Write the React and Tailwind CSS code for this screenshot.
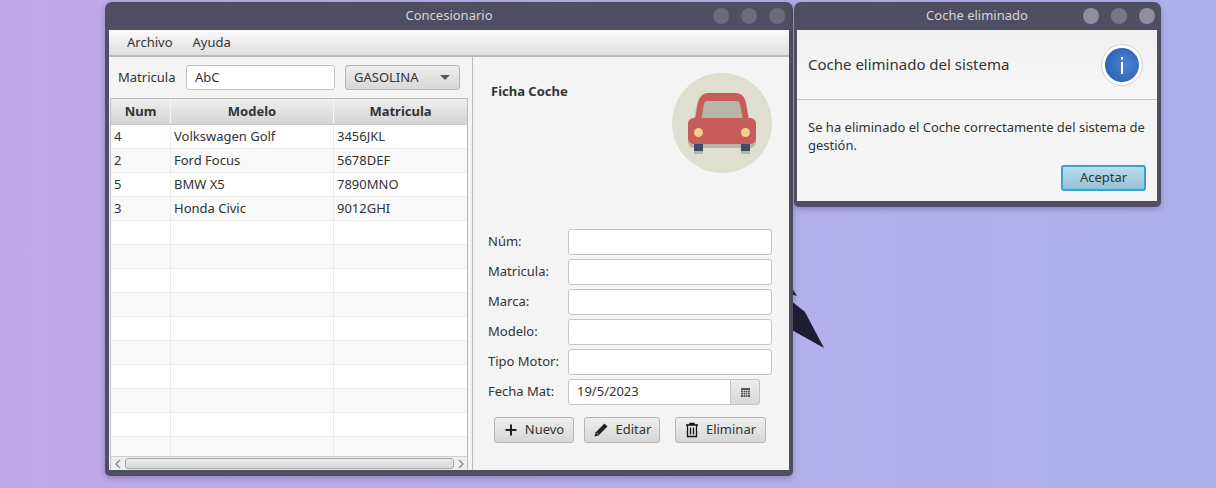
import React from "react";

const font = { fontFamily: '"Noto Sans", sans-serif' };
const rows = [
  ["4", "Volkswagen Golf", "3456JKL"],
  ["2", "Ford Focus", "5678DEF"],
  ["5", "BMW X5", "7890MNO"],
  ["3", "Honda Civic", "9012GHI"],
  ["", "", ""], ["", "", ""], ["", "", ""], ["", "", ""], ["", "", ""],
  ["", "", ""], ["", "", ""], ["", "", ""], ["", "", ""], ["", "", ""],
];
const fields = ["Núm:", "Matricula:", "Marca:", "Modelo:", "Tipo Motor:"];

function Dots() {
  return (
    <div className="absolute right-[4px] top-[7px] flex gap-[12px]">
      <span className="w-[16px] h-[16px] rounded-full bg-[#6c6b78]" />
      <span className="w-[16px] h-[16px] rounded-full bg-[#6c6b78]" />
      <span className="w-[16px] h-[16px] rounded-full bg-[#6c6b78]" />
    </div>
  );
}

function Car() {
  return (
    <svg width="100" height="100" viewBox="672 72 100 100" className="block">
      <circle cx="722" cy="122" r="50" fill="#dfdfd0" />
      <path d="M688 124h68v17a6 6 0 0 1-6 6h-56a6 6 0 0 1-6-6z" fill="#b6b6a8" />
      <rect x="694" y="146" width="9" height="7" fill="#b6b6a8" />
      <rect x="741" y="146" width="9" height="7" fill="#b6b6a8" />
      <rect x="694" y="143" width="9" height="7" fill="#3e4c66" />
      <rect x="741" y="143" width="9" height="7" fill="#3e4c66" />
      <path d="M704 100h38c1.500 0 2.500 1 3 3l3 15h-54l3-15c.5-2 1.500-3 3-3z" fill="#b6b6a8" />
      <path d="M695 119l3-17c1-6 5-10 10-10h28c5 0 9 4 10 10l3 17h-6l-3-16c-.4-2-1.500-3-3-3h-30c-1.500 0-2.600 1-3 3l-3 16z" fill="#c75c5c" />
      <path d="M694 117h56c3.500 0 6 2.500 6 6v14c0 3.500-2.500 6-6 6h-56c-3.500 0-6-2.500-6-6v-14c0-3.500 2.500-6 6-6z" fill="#c75c5c" />
      <circle cx="698.500" cy="131.500" r="4.500" fill="#f5cf87" />
      <circle cx="745.500" cy="131.500" r="4.500" fill="#f5cf87" />
    </svg>
  );
}

function Btn({ w, icon, label, cls = "" }) {
  return (
    <div className={`h-[26px] rounded-[3px] border border-[#b5b5b5] bg-gradient-to-b from-[#efefef] to-[#d6d6d6] flex items-center justify-center gap-[7px] text-[13px] text-[#333] ${cls}`} style={{ width: w }}>
      {icon}
      <span>{label}</span>
    </div>
  );
}

export default function App() {
  return (
    <div className="relative w-[1216px] h-[488px] overflow-hidden bg-gradient-to-r from-[#c0a9e8] via-[#b6afe9] to-[#aeb1ec]" style={font}>
      <svg className="absolute left-[780px] top-[270px]" width="60" height="90" viewBox="780 270 60 90">
        <path d="M790 285L797 296L790 294z" fill="#1e1d33" />
        <path d="M790 300L805 312L824 348L790 329z" fill="#1e1d33" />
      </svg>

      {/* Main window */}
      <div className="absolute left-[105px] top-[2px] w-[688px] h-[474px] rounded-t-[7px] rounded-b-[5px] bg-[#504e62] px-[4px] pb-[6px] flex flex-col shadow-[0_2px_6px_rgba(40,30,80,0.3)]">
        <div className="relative h-[28px] shrink-0 flex items-center justify-center text-[13px] text-[#d5d5dc]">
          Concesionario
          <div className="absolute right-[4px] top-[6px] flex gap-[12px]">
            <span className="w-[16px] h-[16px] rounded-full bg-[#6c6b78]" />
            <span className="w-[16px] h-[16px] rounded-full bg-[#6c6b78]" />
            <span className="w-[16px] h-[16px] rounded-full bg-[#6c6b78]" />
          </div>
        </div>
        <div className="h-[27px] shrink-0 bg-gradient-to-b from-[#fbfbfb] to-[#dedede] border-b-2 border-[#b9b9b9] flex items-center gap-[20px] pl-[18px] text-[13px] text-[#333]">
          <span>Archivo</span>
          <span>Ayuda</span>
        </div>
        <div className="flex-1 flex min-h-0 bg-[#f4f4f4]">
          {/* left */}
          <div className="w-[359px] shrink-0 flex flex-col">
            <div className="h-[41px] shrink-0 flex items-center pl-[9px] text-[13px] text-[#333]">
              <span className="w-[68px]">Matricula</span>
              <div className="w-[149px] h-[25px] rounded-[3px] border border-[#c4c4c4] bg-white flex items-center pl-[8px]">AbC</div>
              <div className="ml-[10px] w-[115px] h-[25px] rounded-[3px] border border-[#b5b5b5] bg-gradient-to-b from-[#ededed] to-[#d8d8d8] flex items-center justify-between pl-[8px] pr-[9px]">
                <span>GASOLINA</span>
                <span className="w-0 h-0 border-x-[5px] border-x-transparent border-t-[5px] border-t-[#555]" />
              </div>
            </div>
            <div className="flex-1 min-h-0 ml-[1px] border-x border-t border-[#bdbdbd] bg-white flex flex-col overflow-hidden">
              <div className="h-[26px] shrink-0 flex font-bold text-[13px] text-[#333] bg-gradient-to-b from-[#eeeeee] to-[#d4d4d4] border-b border-[#c8c8c8]">
                <div className="w-[60px] shrink-0 flex items-center justify-center border-r border-[#f4f4f4]">Num</div>
                <div className="w-[163px] shrink-0 flex items-center justify-center border-r border-[#f4f4f4]">Modelo</div>
                <div className="flex-1 flex items-center justify-center">Matricula</div>
              </div>
              <div className="flex-1 min-h-0 overflow-hidden">
                {rows.map((r, i) => (
                  <div key={i} className={`h-[24px] flex text-[13px] text-[#333] border-b border-[#ececec] ${i % 2 ? "bg-[#f9f9f9]" : "bg-white"}`}>
                    <div className="w-[60px] shrink-0 pl-[3px] leading-[23px] border-r border-[#ececec]">{r[0]}</div>
                    <div className="w-[163px] shrink-0 pl-[3px] leading-[23px] border-r border-[#ececec]">{r[1]}</div>
                    <div className="flex-1 pl-[3px] leading-[23px]">{r[2]}</div>
                  </div>
                ))}
              </div>
              <div className="h-[14px] shrink-0 bg-[#eeeeee] border-t border-[#d0d0d0] flex items-center">
                <svg width="12" height="12" viewBox="0 0 12 12" className="shrink-0 ml-[1px]"><path d="M8 2L4 6l4 4" fill="none" stroke="#8f8f8f" strokeWidth="1.500" /></svg>
                <div className="ml-[1px] w-[332px] h-[11px] rounded-[3px] border border-[#a8a8a8] bg-gradient-to-b from-[#ececec] to-[#d8d8d8]" />
                <svg width="12" height="12" viewBox="0 0 12 12" className="shrink-0 ml-[1px]"><path d="M4 2l4 4-4 4" fill="none" stroke="#8f8f8f" strokeWidth="1.500" /></svg>
              </div>
            </div>
          </div>
          {/* divider */}
          <div className="w-[5px] shrink-0 bg-[#f4f4f4] border-r border-[#bdbdbd]" />
          {/* right */}
          <div className="flex-1 relative flex flex-col pl-[15px] text-[13px] text-[#333]">
            <div className="h-[172px] shrink-0 flex justify-between items-start pr-[17px] pt-[16px]">
              <span className="font-bold ml-[3px] mt-[9px] leading-[18px]">Ficha Coche</span>
              <Car />
            </div>
            <div className="flex flex-col gap-[4px]">
              {fields.map((f) => (
                <div key={f} className="flex items-center h-[26px]">
                  <span className="w-[80px]">{f}</span>
                  <div className="w-[204px] h-[26px] rounded-[3px] border border-[#c4c4c4] bg-white" />
                </div>
              ))}
              <div className="flex items-center h-[26px]">
                <span className="w-[80px]">Fecha Mat:</span>
                <div className="w-[163px] h-[26px] rounded-l-[3px] border border-[#c4c4c4] bg-white flex items-center pl-[8px]">19/5/2023</div>
                <div className="w-[29px] h-[26px] rounded-r-[3px] border border-l-0 border-[#c4c4c4] bg-gradient-to-b from-[#ededed] to-[#d8d8d8] flex items-center justify-center">
                  <svg width="9" height="9" viewBox="0 0 9 9">
                    <rect width="9" height="9" fill="#555" />
                    <path d="M0 2.500h9M0 4.500h9M0 6.500h9M2.500 2v7M4.500 2v7M6.500 2v7" stroke="#e0e0e0" strokeWidth="0.600" />
                  </svg>
                </div>
              </div>
            </div>
            <div className="flex mt-[12px] ml-[6px]">
              <Btn w={80} label="Nuevo" icon={<svg width="14" height="14" viewBox="0 0 14 14"><path d="M7 1.500v11M1.500 7h11" stroke="#222" strokeWidth="2" /></svg>} />
              <Btn w={76} cls="ml-[10px]" label="Editar" icon={<svg width="16" height="16" viewBox="0 0 16 16"><path d="M1.500 14.500l1-4L11.500 1.500l3 3-9 9z" fill="#222" /><path d="M3.500 11l1.500 1.500" stroke="#ddd" strokeWidth="1" /></svg>} />
              <Btn w={91} cls="ml-[15px]" label="Eliminar" icon={<svg width="14" height="16" viewBox="0 0 14 16"><path d="M1 3h12M5 3V1.500h4V3M2.500 3v11.500h9V3M5.500 5.500v7M8.500 5.500v7" fill="none" stroke="#111" strokeWidth="1.300" /></svg>} />
            </div>
          </div>
        </div>
      </div>

      {/* Dialog */}
      <div className="absolute left-[794px] top-[2px] w-[367px] h-[205px] rounded-t-[7px] rounded-b-[5px] bg-[#504e62] pl-[3px] pr-[4px] pb-[6px] flex flex-col shadow-[0_2px_6px_rgba(40,30,80,0.3)]">
        <div className="relative h-[28px] shrink-0 flex items-center justify-center text-[13px] text-[#d5d5dc]">
          Coche eliminado
          <div className="absolute right-[2px] top-[6px] flex gap-[12px]">
            <span className="w-[16px] h-[16px] rounded-full bg-[#8f8e9a]" />
            <span className="w-[16px] h-[16px] rounded-full bg-[#77768a]" />
            <span className="w-[16px] h-[16px] rounded-full bg-[#8f8e9a]" />
          </div>
        </div>
        <div className="flex-1 flex flex-col bg-[#f4f4f4] min-h-0">
          <div className="h-[70px] shrink-0 border-b border-[#c8c8c8] flex items-center justify-between pl-[11px] pr-[14px] text-[15px] text-[#333] bg-gradient-to-b from-[#f0f0f0] to-[#f7f7f7]">
            <span>Coche eliminado del sistema</span>
            <svg width="42" height="42" viewBox="0 0 42 42">
              <defs>
                <radialGradient id="ig" cx="0.6" cy="0.5" r="0.6">
                  <stop offset="0" stopColor="#4a84d6" />
                  <stop offset="1" stopColor="#2e62b4" />
                </radialGradient>
              </defs>
              <circle cx="21" cy="21" r="20.500" fill="#fff" stroke="#cfcfcf" />
              <circle cx="21" cy="21" r="17" fill="url(#ig)" />
              <rect x="20" y="18" width="2" height="12" fill="#fff" />
              <rect x="20" y="13" width="2" height="2.500" fill="#fff" />
            </svg>
          </div>
          <div className="pl-[11px] pr-[8px] pt-[18px] text-[13px] leading-[18px] text-[#333]">
            Se ha eliminado el Coche correctamente del sistema de gestión.
          </div>
          <div className="flex justify-end pr-[11px] mt-[11px]">
            <div className="w-[85px] h-[26px] rounded-[3px] border-2 border-[#35a5cf] bg-gradient-to-b from-[#bcdcec] to-[#93c2d8] flex items-center justify-center text-[13px] text-[#333]">Aceptar</div>
          </div>
        </div>
      </div>
    </div>
  );
}
